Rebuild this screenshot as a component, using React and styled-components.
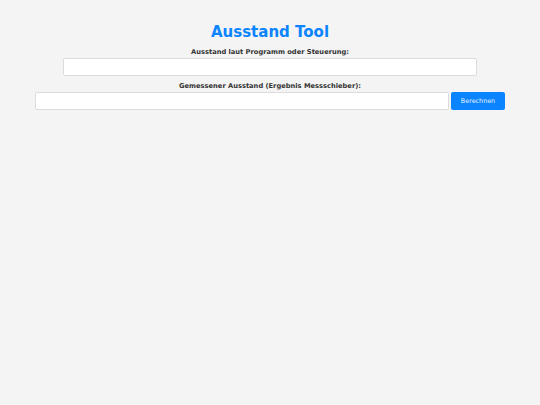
import React from "react";
import styled, { createGlobalStyle } from "styled-components";

const Global = createGlobalStyle`
  html, body { margin: 0; padding: 0; background: #f4f4f4; }
  body { font-family: "DejaVu Sans", Verdana, sans-serif; width: 540px; height: 405px; }
`;

const Page = styled.div`
  display: flex;
  flex-direction: column;
  align-items: center;
  padding-top: 22px;
`;

const Title = styled.h1`
  margin: 0 0 6px;
  font-size: 15px;
  line-height: 20px;
  font-weight: bold;
  color: #0a84ff;
`;

const Group = styled.div`
  display: flex;
  flex-direction: column;
  align-items: center;
  margin-bottom: ${(p) => p.$mb || 0}px;
`;

const Label = styled.label`
  font-size: 6.7px;
  font-weight: bold;
  color: #333;
  line-height: 9px;
  margin-bottom: 1px;
`;

const Row = styled.div`
  display: flex;
  gap: 2px;
`;

const Input = styled.input`
  box-sizing: border-box;
  width: 414px;
  height: 18px;
  border: 1px solid #dcdcdc;
  border-radius: 2px;
  background: #fff;
  padding: 0 4px;
  font-family: "DejaVu Sans", sans-serif;
  font-size: 7px;
  outline: none;
`;

const Button = styled.button`
  box-sizing: border-box;
  width: 54px;
  height: 18px;
  border: none;
  border-radius: 2px;
  background: #0a84ff;
  color: #e6f1ff;
  font-family: "DejaVu Sans", sans-serif;
  font-size: 6.4px;
  padding: 0;
  cursor: pointer;
`;

export default function App() {
  return (
    <>
      <Global />
      <Page>
        <Title>Ausstand Tool</Title>
        <Group $mb={6}>
          <Label>Ausstand laut Programm oder Steuerung:</Label>
          <Input type="text" />
        </Group>
        <Group>
          <Label>Gemessener Ausstand (Ergebnis Messschieber):</Label>
          <Row>
            <Input type="text" />
            <Button>Berechnen</Button>
          </Row>
        </Group>
      </Page>
    </>
  );
}
